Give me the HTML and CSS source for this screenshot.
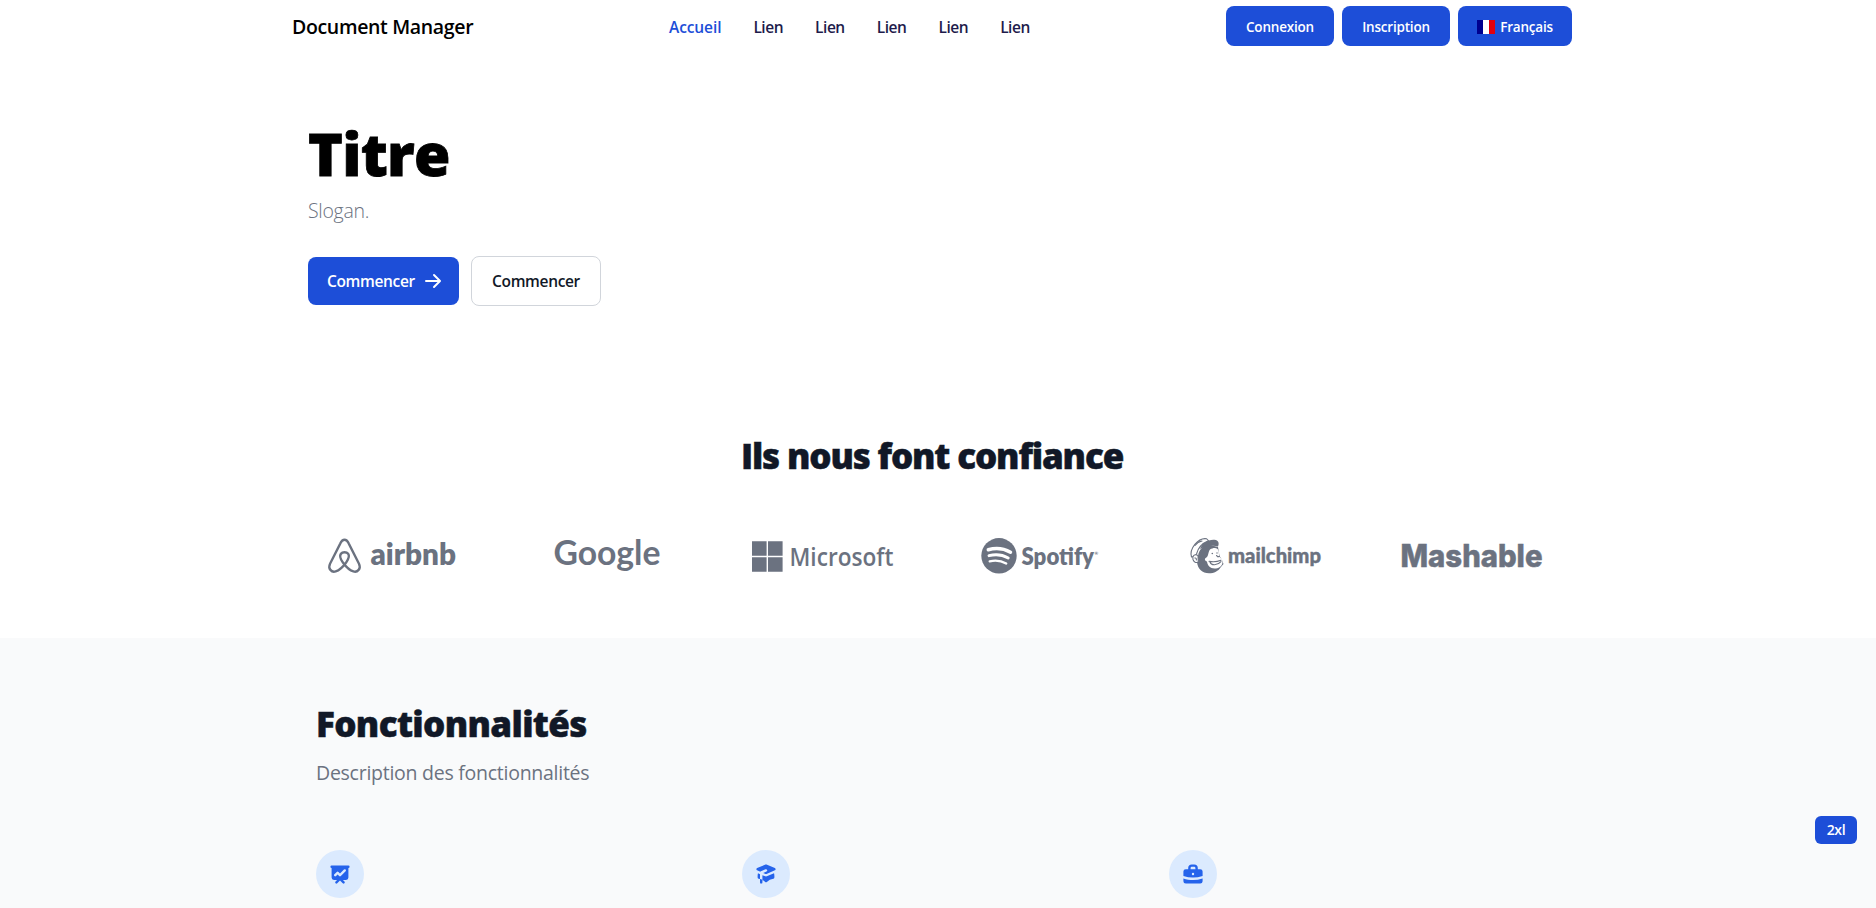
FILE: index.html
```html
<!DOCTYPE html>
<html lang="fr">
<head>
<meta charset="utf-8">
<title>Document Manager</title>
<link rel="stylesheet" href="styles.css">
</head>
<body>
<header class="header">
  <nav class="nav">
    <a class="brand"><span>Document Manager</span></a>
    <ul class="links">
      <li class="active">Accueil</li><li>Lien</li><li>Lien</li><li>Lien</li><li>Lien</li><li>Lien</li>
    </ul>
    <div class="actions">
      <a class="btn">Connexion</a>
      <a class="btn inscription">Inscription</a>
      <a class="btn lang"><svg class="flag" viewBox="0 0 18 14"><path fill="#00008f" d="M0 0h6v14H0z"/><path fill="#fff" d="M6 0h6v14H6z"/><path fill="#e1000f" d="M12 0h6v14h-6z"/></svg>Français</a>
    </div>
  </nav>
</header>
<section class="hero">
  <h1>Titre</h1>
  <p class="slogan">Slogan.</p>
  <div class="cta">
    <a class="primary">Commencer<svg viewBox="0 0 20 20" fill="currentColor"><path fill-rule="evenodd" d="M10.293 3.293a1 1 0 011.414 0l6 6a1 1 0 010 1.414l-6 6a1 1 0 01-1.414-1.414L14.586 11H3a1 1 0 110-2h11.586l-4.293-4.293a1 1 0 010-1.414z"/></svg></a>
    <a class="secondary">Commencer</a>
  </div>
</section>
<section class="trust">
  <h2>Ils nous font confiance</h2>
  <div class="logos">
    <svg viewBox="0 0 168 40">
      <path fill="none" stroke="currentColor" stroke-width="2.600" stroke-linejoin="round" transform="translate(3.300 .6) scale(.91 .97)" d="M36.500 4.300C34.200 4.300 33 5.800 31.800 8.200L20.600 29C17.900 34.200 22.300 38.200 26.800 36.900C30.500 35.900 34.800 32.200 38.300 27.700C41.200 23.900 42 20.700 40.500 18.800C38.700 16.600 34.300 16.600 32.500 18.800C31 20.700 31.800 23.900 34.700 27.700C38.200 32.200 42.500 35.900 46.200 36.900C50.700 38.200 55.100 34.200 52.400 29L41.200 8.200C40 5.800 38.800 4.300 36.500 4.300z"/>
      <text class="lato heavy" x="62.500" y="30" font-size="29.500" textLength="85.500" lengthAdjust="spacingAndGlyphs">airbnb</text>
    </svg>
    <svg viewBox="0 0 168 40"><text class="lato google" x="29.500" y="30" font-size="35" textLength="107" lengthAdjust="spacingAndGlyphs">Google</text></svg>
    <svg viewBox="0 0 168 40">
      <path fill="currentColor" d="M12 6.200h14.600v14.600H12zM28 6.200h14.600v14.600H28zM12 22.200h14.600v14.600H12zM28 22.200h14.600v14.600H28z"/>
      <text class="open semi" x="49.500" y="30.500" font-size="25" textLength="104" lengthAdjust="spacingAndGlyphs">Microsoft</text>
    </svg>
    <svg viewBox="0 0 168 40">
      <circle cx="43" cy="20.800" r="17.700" fill="currentColor"/>
      <g fill="none" stroke="#fff" stroke-linecap="round"><path stroke-width="3.500" d="M32.300 14.800c7.500-2.100 15.700-1.200 22.200 2.400"/><path stroke-width="2.900" d="M33 20.700c6.600-1.800 13.400-1 19.200 2.300"/><path stroke-width="2.400" d="M33.700 26.300c5.600-1.300 11.500-.7 16.500 2.200"/></g>
      <text class="lato heavy" x="65.500" y="29.500" font-size="24" textLength="72.500" lengthAdjust="spacingAndGlyphs">Spotify</text>
      <text class="lato" x="138.500" y="20" font-size="4.500">®</text>
    </svg>
    <svg viewBox="0 0 168 40">
      <path fill="currentColor" d="M26 21C27 13 33 10 38 10l8 2 1.500 9 2.500 4 1.500 4-3 3.500c-2 3.500-6.500 5.800-11.500 5.800C30 38.200 26 34 25 27.500z"/>
      <path fill="#fff" d="M38 14.500c3-2 6-2 7.500-.5 2 2 1 5 2 8l2.700 2.500.3 3c-.5 4-4 6-8 6-4.500 0-7-3-7.500-7-2-.5-3-2.500-1-3.700 2.500-1 2-5.500 4-8.300z"/>
      <path fill="#fff" stroke="currentColor" stroke-width="1.100" d="M19.500 22C17 14 26 2.500 34.500 3.700l2 2C30.500 8 26 13 24.500 19c-1 2-2.800 3-5 3z"/>
      <path fill="#fff" stroke="currentColor" stroke-width="1.100" d="M26 20.500c-3.500-2-6 .5-5 4 .8 2.500 3 3.700 5.300 2.500z"/>
      <path fill="currentColor" d="M28 14c2-6 8-9.800 14.500-9.300 4 .3 5 3.500 3.500 6.800-5.500-2-13 0-18 2.500z"/>
      <path fill="none" stroke="currentColor" stroke-width="1.100" stroke-linecap="round" d="M23 10.500c2-2.800 4-4 7-4.500M22.800 23c1.400-.3 1.800.8 1.500 2M44.500 20.500l1.500 1.300 1.500-.6M37 26.300c4.500 1 8.500.4 12-1M38 27c1 3.800 7.500 3.600 11-.4"/>
      <circle cx="40.300" cy="18.500" r=".8" fill="currentColor"/><circle cx="45" cy="18" r=".7" fill="currentColor"/>
      <text class="lato black mc" x="56" y="28" font-size="21" textLength="93" lengthAdjust="spacingAndGlyphs">mailchimp</text>
    </svg>
    <svg viewBox="0 0 168 40"><text class="inter" x="12.500" y="32" font-size="31" textLength="142" lengthAdjust="spacingAndGlyphs">Mashable</text></svg>
  </div>
</section>
<section class="features">
  <div class="features-inner">
    <h2>Fonctionnalités</h2>
    <p>Description des fonctionnalités</p>
    <div class="grid">
      <div class="cell"><span class="circle"><svg viewBox="0 0 20 20" fill="currentColor"><path fill-rule="evenodd" d="M3 3a1 1 0 000 2v8a2 2 0 002 2h2.586l-1.293 1.293a1 1 0 101.414 1.414L10 15.414l2.293 2.293a1 1 0 001.414-1.414L12.414 15H15a2 2 0 002-2V5a1 1 0 100-2H3zm11.707 4.707a1 1 0 00-1.414-1.414L10 9.586 8.707 8.293a1 1 0 00-1.414 0l-2 2a1 1 0 101.414 1.414L8 10.414l1.293 1.293a1 1 0 001.414 0l4-4z"/></svg></span></div>
      <div class="cell"><span class="circle"><svg viewBox="0 0 20 20" fill="currentColor"><path d="M10.394 2.080a1 1 0 00-.788 0l-7 3a1 1 0 000 1.840L5.250 8.051a.999.999 0 01.356-.257l4-1.714a1 1 0 11.788 1.838L7.667 9.088l1.940.831a1 1 0 00.787 0l7-3a1 1 0 000-1.838l-7-3zM3.310 9.397L5 10.120v4.102a8.969 8.969 0 00-1.050-.174 1 1 0 01-.890-.890 11.115 11.115 0 01.250-3.762zM9.300 16.573A9.026 9.026 0 007 14.935v-3.957l1.818.780a3 3 0 002.364 0l5.508-2.361a11.026 11.026 0 01.250 3.762 1 1 0 01-.890.890 8.968 8.968 0 00-5.350 2.524 1 1 0 01-1.400 0zM6 18a1 1 0 001-1v-2.065a8.935 8.935 0 00-2-.712V17a1 1 0 001 1z"/></svg></span></div>
      <div class="cell"><span class="circle"><svg viewBox="0 0 20 20" fill="currentColor"><path fill-rule="evenodd" d="M6 6V5a3 3 0 013-3h2a3 3 0 013 3v1h2a2 2 0 012 2v3.570A22.952 22.952 0 0110 13a22.950 22.950 0 01-8-1.430V8a2 2 0 012-2h2zm2-1a1 1 0 011-1h2a1 1 0 011 1v1H8V5zm1 5a1 1 0 011-1h.010a1 1 0 110 2H10a1 1 0 01-1-1z"/><path d="M2 13.692V16a2 2 0 002 2h12a2 2 0 002-2v-2.308A24.974 24.974 0 0110 15c-2.796 0-5.487-.460-8-1.308z"/></svg></span></div>
    </div>
  </div>
</section>
<div class="badge">2xl</div>
</body>
</html>
```

FILE: styles.css
```css
* { box-sizing: border-box; margin: 0; padding: 0; }
html, body { height: 908px; overflow: hidden; }
body { font-family: "Open Sans", "Noto Sans", sans-serif; font-size: 16px; line-height: 24px; color: #111827; background: #fff; }
svg { display: block; }
.header { height: 52px; padding-right: 12px; }
.nav { width: 1280px; margin: 0 auto; height: 52px; display: grid; grid-template-columns: 377px 1fr auto; align-items: center; }
.brand { padding-top: 2px; font-size: 19.5px; line-height: 28px; font-weight: 600; color: #000; letter-spacing: -0.34px; white-space: nowrap; }
.links { display: flex; gap: 32px; list-style: none; padding-top: 1px; font-size: 15.5px; font-weight: 600; letter-spacing: -0.46px; color: #1e1b4b; }
.links .active { color: #1d4ed8; letter-spacing: -0.1px; }
.actions { display: flex; gap: 8px; }
.btn { height: 40px; width: 108px; border-radius: 8px; background: #1d4ed8; color: #fff; font-size: 13.5px; line-height: 20px; font-weight: 600; letter-spacing: -0.2px; display: flex; align-items: center; justify-content: center; padding-top: 1px; }
.lang { width: 114px; gap: 5px; }
.flag { width: 18px; height: 14px; }
.hero { width: 1248px; margin-left: 308px; padding-top: 71px; height: 324px; }
h1 { font-size: 59px; line-height: 60px; font-weight: 800; letter-spacing: -0.7px; color: #000; -webkit-text-stroke: 0.8px; }
.slogan { margin-top: 14px; font-size: 19.5px; line-height: 28px; font-weight: 300; color: #6b7280; letter-spacing: -0.3px; }
.cta { display: flex; align-items: center; gap: 12px; margin-top: 31px; font-size: 15.5px; font-weight: 600; letter-spacing: -0.34px; }
.primary { display: flex; align-items: center; width: 151px; height: 48px; padding-left: 19px; border-radius: 8px; background: #1d4ed8; color: #fff; }
.primary svg { width: 20px; height: 20px; margin-left: 8px; }
.secondary { width: 130px; height: 50px; border: 1px solid #d1d5db; border-radius: 8px; display: flex; align-items: center; justify-content: center; }
h2 { font-size: 35px; line-height: 40px; font-weight: 800; letter-spacing: -0.65px; -webkit-text-stroke: 0.5px; }
.trust { height: 262px; padding: 60px 12px 0 0; }
.trust h2 { text-align: center; letter-spacing: -1.15px; }
.logos { display: grid; grid-template-columns: repeat(6, 168px); gap: 48px; width: 1248px; margin: 59px auto 0; color: #6b7280; }
.logos svg { width: 168px; height: 40px; overflow: visible; }
.logos text { fill: currentColor; }
.lato { font-family: Lato, sans-serif; font-weight: 700; }
.lato.heavy { font-weight: 800; }
.lato.black { font-weight: 900; }
.lato.google { font-weight: 700; }
.lato.mc { stroke: currentColor; stroke-width: 0.4px; }
.open { font-family: "Open Sans", sans-serif; font-weight: 600; }
.inter { font-family: Inter, sans-serif; font-weight: 800; stroke: currentColor; stroke-width: 0.5px; }
.features { height: 270px; background: #f9fafb; padding: 66px 0 0 316px; overflow: hidden; }
.features-inner { width: 1231px; }
.features p { margin-top: 15px; font-size: 19.5px; line-height: 28px; color: #6b7280; letter-spacing: -0.26px; }
.grid { display: grid; grid-template-columns: repeat(3, 1fr); gap: 48px; margin-top: 63px; }
.circle { display: flex; align-items: center; justify-content: center; width: 48px; height: 48px; border-radius: 50%; background: #dbeafe; color: #2563eb; }
.circle svg { width: 24px; height: 24px; }
.badge { position: fixed; right: 19px; bottom: 64px; width: 42px; height: 28px; border-radius: 6px; background: #1d4ed8; color: #fff; font-size: 14px; line-height: 28px; font-weight: 600; letter-spacing: -0.3px; text-align: center; }
```
